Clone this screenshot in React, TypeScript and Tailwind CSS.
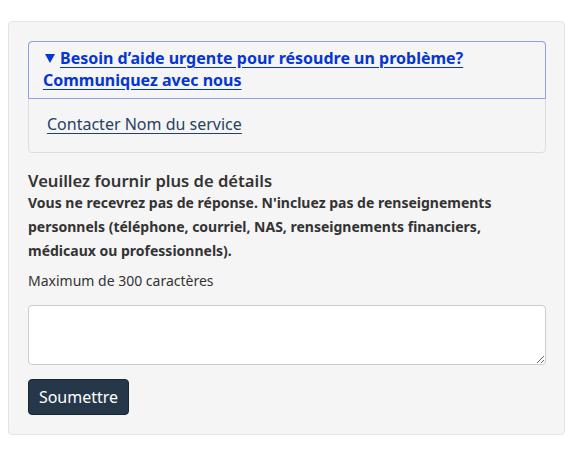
import React from "react";

export default function App() {
  return (
    <div className="w-[575px] h-[449px] bg-white pt-[21px] pl-[8px]" style={{ fontFamily: '"Noto Sans", sans-serif' }}>
      <div className="w-[557px] h-[414px] bg-[#f5f5f5] border border-[#e3e3e3] rounded-[4px] p-[19px] text-[#333]">
        <div className="w-[518px] h-[112px] border border-[#dddddd] rounded-[4px] flex flex-col">
          <div className="h-[58px] border border-[#8da0e6] border-b-[#8da0e6] border-b-dotted rounded-t-[4px] -m-px mb-0 pl-[14px] pt-[5px] pr-[10px] leading-[22px] text-[16px] font-bold text-[#0535d2]">
            <svg width="10" height="9" viewBox="0 0 10 9" className="inline-block align-baseline ml-[2px] mr-[5px] mb-[1px]">
              <polygon points="0,0 10,0 5,9" fill="#0535d2" />
            </svg>
            <span className="underline underline-offset-[3px]">Besoin d’aide urgente pour résoudre un problème? Communiquez avec nous</span>
          </div>
          <div className="pl-[18px] pt-[14px] text-[16px] leading-[22px]">
            <span className="underline underline-offset-[3px] text-[#284162]">Contacter Nom du service</span>
          </div>
        </div>
        <div className="mt-[17px] text-[16.6px] font-semibold leading-[21px] text-[#333]">Veuillez fournir plus de détails</div>
        <div className="text-[14px] font-bold leading-[24px] text-[#333]">
          Vous ne recevrez pas de réponse. N'incluez pas de renseignements personnels (téléphone, courriel, NAS, renseignements financiers, médicaux ou professionnels).
        </div>
        <div className="mt-[8px] text-[14px] leading-[20px] text-[#333]">Maximum de 300 caractères</div>
        <textarea className="mt-[14px] block w-[518px] h-[60px] bg-white border border-[#cccccc] rounded-[4px]" />
        <button className="mt-[14px] w-[101px] h-[36px] bg-[#26374a] text-white text-[16px] rounded-[4px] border border-[#1a2633]">
          Soumettre
        </button>
      </div>
    </div>
  );
}
